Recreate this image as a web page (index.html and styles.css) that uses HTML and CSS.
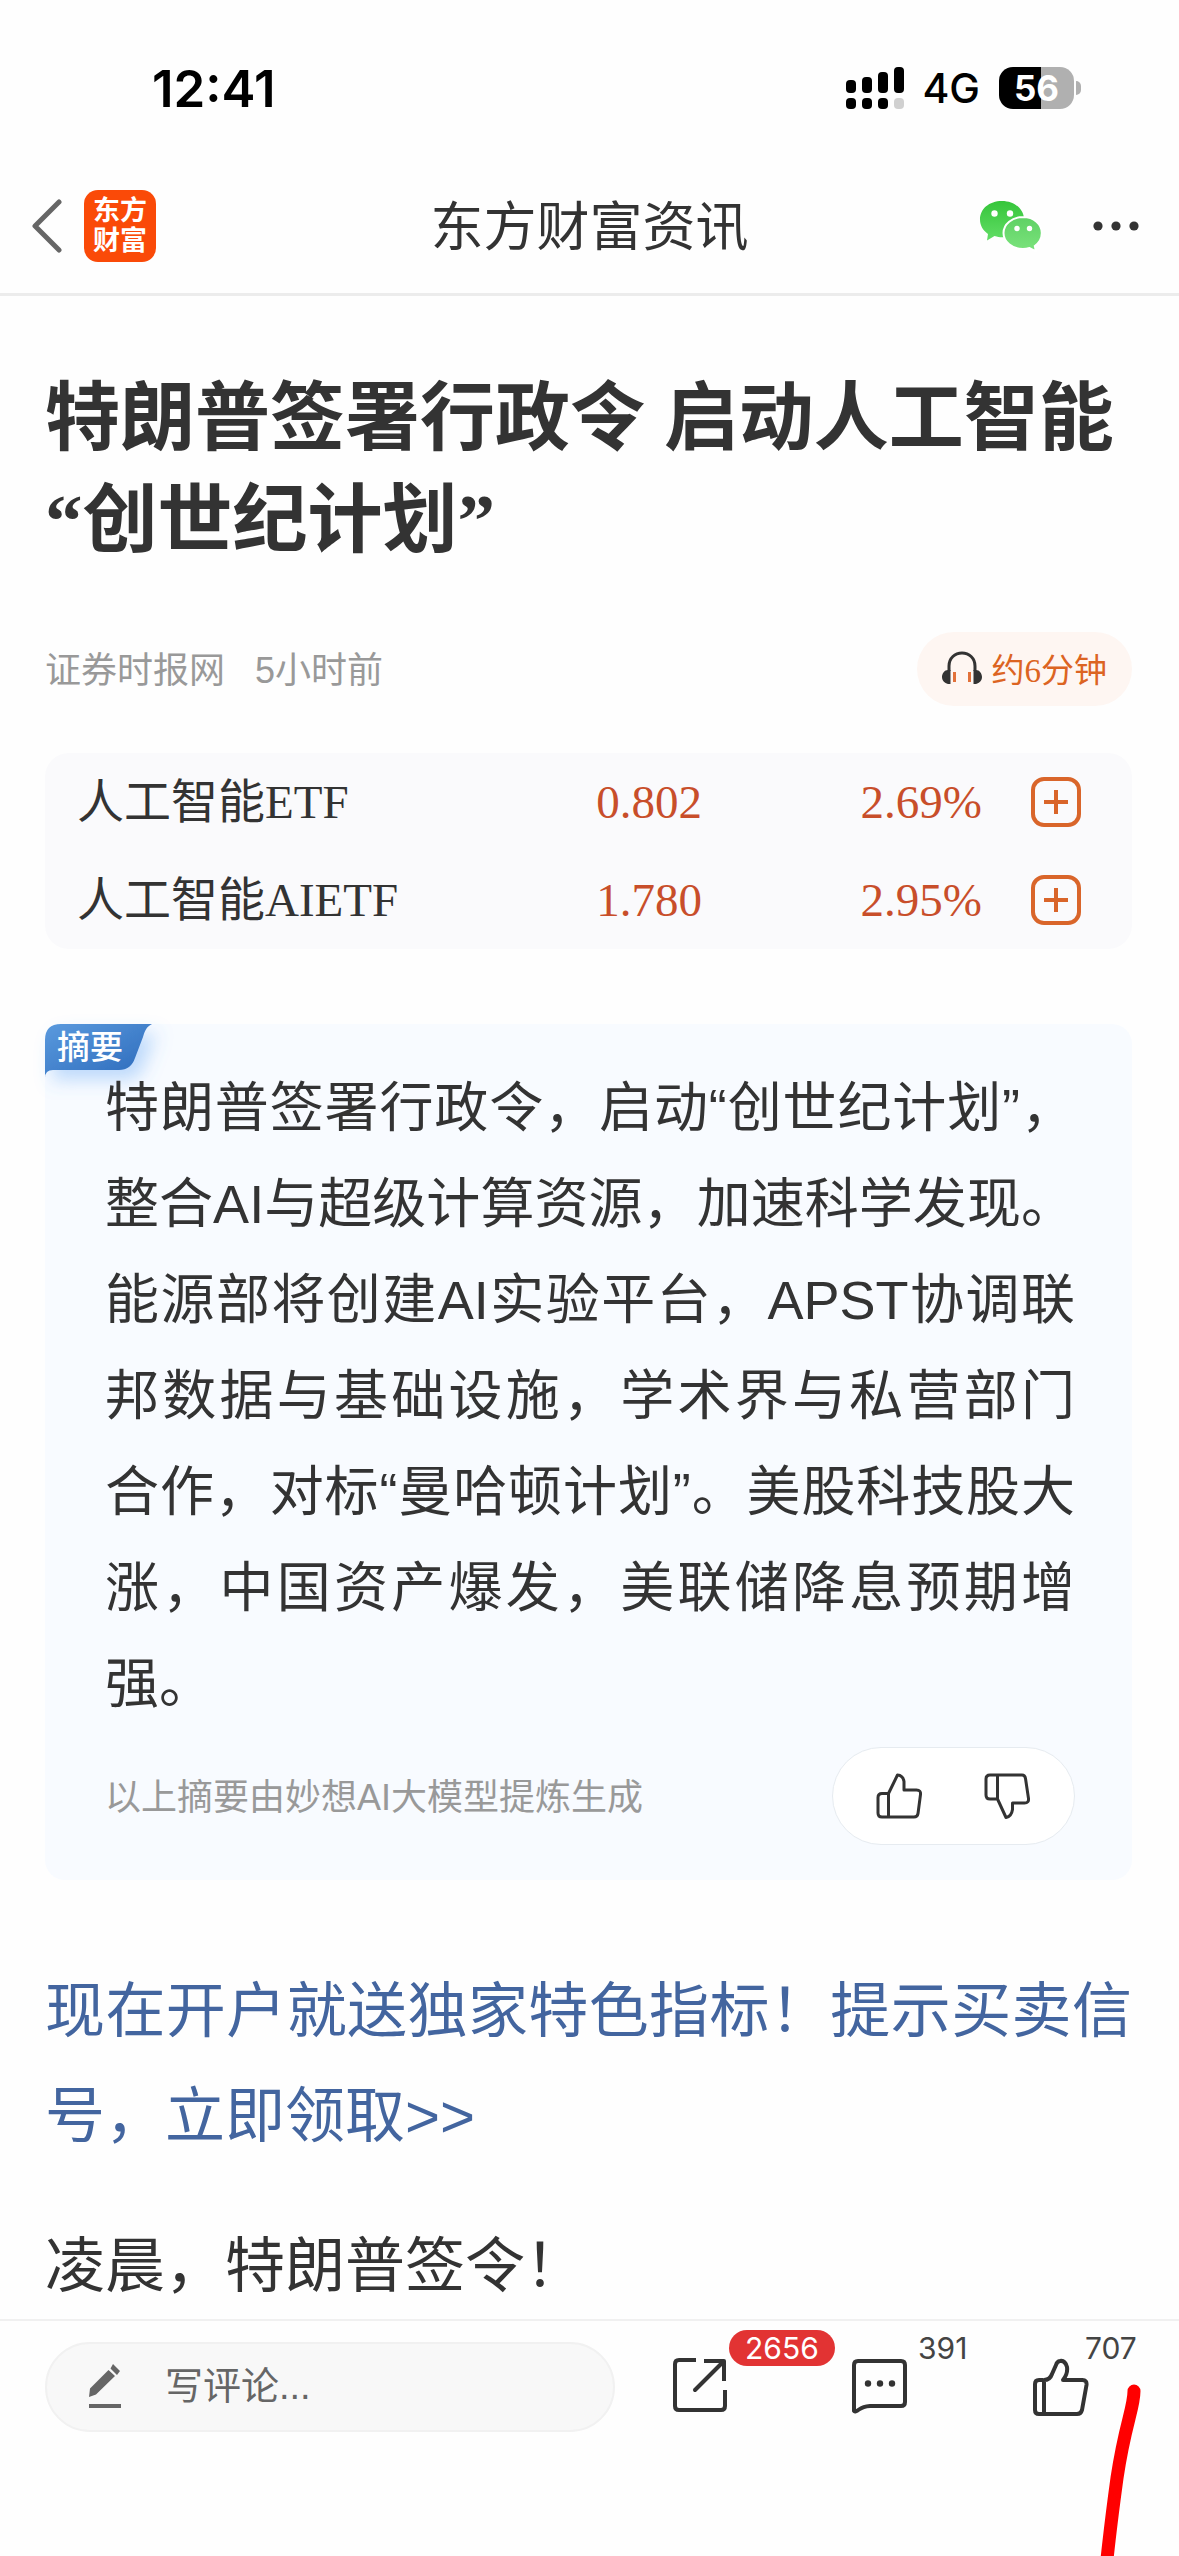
FILE: index.html
```html
<!DOCTYPE html>
<html lang="zh-CN">
<head>
<meta charset="utf-8">
<meta name="viewport" content="width=device-width">
<title>东方财富资讯</title>
<link rel="stylesheet" href="styles.css">
</head>
<body>
<div class="status">
  <span class="clock">12:41</span>
  <div class="status-right">
    <svg width="58" height="42" viewBox="0 0 58 42" aria-hidden="true">
      <rect x="0" y="13" width="10" height="13" rx="4"/>
      <rect x="16" y="10" width="10" height="16" rx="4"/>
      <rect x="32" y="5" width="10" height="21" rx="4"/>
      <rect x="48" y="0" width="10" height="26" rx="4"/>
      <rect x="0" y="31" width="10" height="11" rx="4"/>
      <rect x="16" y="31" width="10" height="11" rx="4"/>
      <rect x="32" y="31" width="10" height="11" rx="4"/>
      <rect x="48" y="31" width="10" height="11" rx="4" fill="#d0d0d0"/>
    </svg>
    <span class="network">4G</span>
    <span class="battery"><span class="battery-level">56</span></span>
  </div>
</div>

<header class="header">
  <button class="icon-button back" aria-label="返回">
    <svg width="30" height="54" viewBox="0 0 30 54" fill="none" stroke="#666" stroke-width="5" stroke-linecap="round" stroke-linejoin="round"><path d="M27 3 3 27l24 24"/></svg>
  </button>
  <a class="logo" href="#"><span>东方</span><span>财富</span></a>
  <span class="header-title">东方财富资讯</span>
  <button class="icon-button wechat" aria-label="微信">
    <svg width="64" height="52" viewBox="0 0 64 52">
      <defs>
        <linearGradient id="g1" x1="0" y1="0" x2="0" y2="1"><stop offset="0" stop-color="#35c53a"/><stop offset="1" stop-color="#62dd66"/></linearGradient>
        <linearGradient id="g2" x1="0" y1="0" x2="0" y2="1"><stop offset="0" stop-color="#5fd165"/><stop offset="1" stop-color="#7be37c"/></linearGradient>
      </defs>
      <path fill="url(#g1)" d="M23 1C10 1 1 9 1 19.500c0 6 3 11 8 14.500l-1 6.500 7.500-4.500c3 1 5 1.200 7.500 1.200 12.500 0 22-8 22-18S35.500 1 23 1Z"/>
      <path fill="url(#g2)" stroke="#fff" stroke-width="2" d="M44 17c-11 0-19.500 7.200-19.500 16S33 49 44 49c2.500 0 4.500-.4 6.500-1l6.500 3.500-1.200-5.500c4.200-3 7-7.500 7-13C62.800 24.200 55 17 44 17Z"/>
      <g fill="#fff"><circle cx="15.500" cy="13.500" r="3.200"/><circle cx="31" cy="13.500" r="3.200"/><circle cx="38" cy="28.500" r="2.700"/><circle cx="50.500" cy="28.500" r="2.700"/></g>
    </svg>
  </button>
  <button class="icon-button more" aria-label="更多">
    <svg width="46" height="10" viewBox="0 0 46 10" fill="#333"><circle cx="5" cy="5" r="4.600"/><circle cx="23" cy="5" r="4.600"/><circle cx="41" cy="5" r="4.600"/></svg>
  </button>
</header>

<main class="article">
  <h1 class="headline">特朗普签署行政令 启动人工智能“创世纪计划”</h1>

  <div class="meta">
    <span class="note">证券时报网</span>
    <time class="note">5小时前</time>
    <button class="listen">
      <svg width="40" height="34" viewBox="0 0 40 34" fill="none">
        <path d="M7 20v-5C7 7 13 2 20 2s13 5 13 13v5" stroke="#333" stroke-width="3"/>
        <path d="M8.500 19v14H6C2.500 32 0 29.500 0 26S2.500 19 6 19ZM31.500 19v14H34c3.500-1 6-3.500 6-7S37.500 19 34 19Z" fill="#333"/>
        <path d="M12.500 21v10M27.500 21v10" stroke="#e2713a" stroke-width="3"/>
      </svg>
      <span>约6分钟</span>
    </button>
  </div>

  <div class="quotes">
    <table>
      <colgroup><col><col class="col-price"><col class="col-change"><col class="col-add"></colgroup>
      <tr>
        <th scope="row">人工智能ETF</th><td>0.802</td><td>2.69%</td>
        <td><button class="icon-button" aria-label="添加人工智能ETF"><svg width="52" height="52" viewBox="0 0 52 52" fill="none" stroke="#d9652a" stroke-width="4"><rect x="3" y="3" width="46" height="46" rx="11"/><path d="M14 26h24M26 14v24"/></svg></button></td>
      </tr>
      <tr>
        <th scope="row">人工智能AIETF</th><td>1.780</td><td>2.95%</td>
        <td><button class="icon-button" aria-label="添加人工智能AIETF"><svg width="52" height="52" viewBox="0 0 52 52" fill="none" stroke="#d9652a" stroke-width="4"><rect x="3" y="3" width="46" height="46" rx="11"/><path d="M14 26h24M26 14v24"/></svg></button></td>
      </tr>
    </table>
  </div>

  <section class="summary">
    <div class="tag">
      <svg class="tag-shape" width="150" height="90" viewBox="0 0 150 90" aria-hidden="true">
        <defs>
          <linearGradient id="g3" x1="0" y1="0" x2="1" y2="1"><stop offset="0" stop-color="#5a9ade"/><stop offset="1" stop-color="#2b69ba"/></linearGradient>
          <filter id="soft" x="-20%" y="-20%" width="160%" height="180%"><feDropShadow dx="8" dy="10" stdDeviation="9" flood-color="#4f9af5" flood-opacity=".35"/></filter>
        </defs>
        <path filter="url(#soft)" fill="url(#g3)" d="M0 16Q0 0 16 0H107C101 3 100 7 98 13L90 34Q86 46 74 46H8Q0 46 0 54Z"/>
      </svg>
      <span class="tag-text">摘要</span>
    </div>
    <p class="summary-text">特朗普签署行政令，启动“创世纪计划”，整合AI与超级计算资源，加速科学发现。能源部将创建AI实验平台，APST协调联邦数据与基础设施，学术界与私营部门合作，对标“曼哈顿计划”。美股科技股大涨，中国资产爆发，美联储降息预期增强。</p>
    <div class="summary-foot">
      <span class="note">以上摘要由妙想AI大模型提炼生成</span>
      <div class="votes">
        <button class="icon-button" aria-label="赞同">
          <svg width="46" height="46" viewBox="0 0 46 46" fill="none" stroke="#333" stroke-width="3" stroke-linejoin="round"><path d="M12.500 20.500H6q-4 0-4 4V40q0 4 4 4h32q3.500 0 4-3.500l2.500-19q.5-4.500-4-4.500H28V8.500Q27 2.500 21.500 2L12.500 20.500V44"/></svg>
        </button>
        <button class="icon-button" aria-label="反对">
          <svg width="46" height="46" viewBox="0 0 46 46" fill="none" stroke="#333" stroke-width="3" stroke-linejoin="round"><path d="M13.500 26H6q-4 0-4-4V6q0-4 4-4h32q3 0 3.500 3.500l3 20q.5 4.500-4 4.500H28.500v6.500Q27.500 43.500 22 44.500L13.500 26V2"/></svg>
        </button>
      </div>
    </div>
  </section>

  <p class="body-text"><a href="#">现在开户就送独家特色指标！提示买卖信号，立即领取&gt;&gt;</a></p>
  <p class="body-text">凌晨，特朗普签令！</p>
</main>

<footer class="toolbar">
  <label class="comment">
    <svg width="34" height="46" viewBox="0 0 34 46" fill="#666" aria-hidden="true"><path d="M19.500 7 26 13 7 31.500 0 34l1-8.500ZM24 1l7 7-3 4-6.500-6.500ZM0 41h32v4H0Z"/></svg>
    <input type="text" placeholder="写评论..." aria-label="写评论">
  </label>
  <button class="action">
    <svg width="54" height="54" viewBox="0 0 54 54" fill="none" stroke="#333" stroke-width="4" stroke-linejoin="round"><path d="M23 2H6Q2 2 2 6v42q0 4 4 4h42q4 0 4-4V32M31 3h20v20"/><path d="M50 4 22 32" stroke-linecap="round"/></svg>
    <span class="count badge">2656</span>
  </button>
  <button class="action">
    <svg width="56" height="56" viewBox="0 0 56 56" fill="none" stroke="#333" stroke-width="4" stroke-linejoin="round"><path d="M2 53V7q0-4 4-4h43q4 0 4 4v37q0 4-4 4H18Q11 48.500 7 51.500T2 53Z"/><g fill="#333" stroke="none"><circle cx="16" cy="25.500" r="3.200"/><circle cx="28" cy="25.500" r="3.200"/><circle cx="40" cy="25.500" r="3.200"/></g></svg>
    <span class="count">391</span>
  </button>
  <button class="action">
    <svg width="56" height="58" viewBox="0 0 56 58" fill="none" stroke="#333" stroke-width="4" stroke-linejoin="round"><path d="M10 22H6q-4 0-4 4v26q0 4 4 4h38q4 0 5-4l4.500-25q.5-5-4-5H30q5-6 4-13Q32 2 27 3q-3 .5-4 4l-4 9q-2 6-8 6v34"/></svg>
    <span class="count likes">707</span>
  </button>
  <svg class="stroke" width="46" height="172" viewBox="0 0 46 172" fill="none" stroke="#f00" stroke-width="13" stroke-linecap="round" aria-hidden="true"><path d="M39 7C39 24 30 40 22 94Q15 145 11 185"/></svg>
</footer>
</body>
</html>
```

FILE: styles.css
```css
* { box-sizing: border-box; }

body {
  margin: 0;
  min-height: 100vh;
  display: flex;
  flex-direction: column;
  background: #fefefe;
  color: #333;
  font-family: "Liberation Sans", "Noto Sans CJK SC", sans-serif;
  text-spacing-trim: space-all;
}

h1, p { margin: 0; }
a { color: #43659f; text-decoration: none; }
svg { display: block; flex: none; }

button {
  border: 0;
  padding: 0;
  background: none;
  color: inherit;
  font: inherit;
}

.icon-button { display: block; }

/* Status bar */
.status {
  display: flex;
  align-items: center;
  justify-content: space-between;
  height: 158px;
  padding: 18px 98px 0 152px;
  color: #000;
  font-family: Inter, sans-serif;
}
.clock { font-size: 51px; font-weight: 600; }
.status-right { display: flex; align-items: center; }
.network { margin: 0 19px 0 18px; font-size: 41px; font-weight: 500; line-height: 48px; }
.battery {
  position: relative;
  width: 75px;
  height: 42px;
  margin-right: 7px;
}
.battery::after {
  content: "";
  position: absolute;
  left: 77px;
  top: 14px;
  width: 5px;
  height: 14px;
  border-radius: 0 5px 5px 0;
  background: #b0b0b0;
}
.battery-level {
  display: block;
  border-radius: 14px;
  background: linear-gradient(90deg, #000 56%, #b0b0b0 56%);
  color: #fff;
  font-size: 35px;
  font-weight: 700;
  line-height: 42px;
  text-align: center;
}

/* Navigation header */
.header {
  position: relative;
  display: flex;
  align-items: center;
  height: 138px;
  padding: 0 40px 0 32px;
  border-bottom: 3px solid #ececec;
}
.logo {
  display: flex;
  flex-direction: column;
  align-items: center;
  justify-content: center;
  width: 72px;
  height: 72px;
  margin-left: 22px;
  border-radius: 14px;
  background: #fa4a08;
  color: #fff;
  font-size: 27px;
  font-weight: 700;
  line-height: 30px;
}
.header-title {
  position: absolute;
  left: 0;
  right: 0;
  padding-top: 4px;
  text-align: center;
  font-size: 53px;
  line-height: 72px;
  pointer-events: none;
}
.wechat { margin-left: auto; }
.more { margin-left: 50px; }

/* Article */
.article { flex: 1; padding: 72px 47px 0 45px; }
.headline {
  font-family: "Liberation Serif", "Noto Sans CJK SC", serif;
  font-size: 75px;
  line-height: 102px;
}
.meta {
  display: flex;
  align-items: center;
  gap: 30px;
  margin-top: 60px;
  color: #999;
}
.note {
  padding-bottom: 4px;
  color: #999;
  font-size: 36px;
}
.listen {
  display: flex;
  align-items: center;
  gap: 10px;
  height: 74px;
  margin-left: auto;
  padding: 0 25px 2px;
  border-radius: 37px;
  background: #fef6f2;
  color: #dc6422;
  font-family: "Liberation Serif", "Noto Sans CJK SC", serif;
  font-size: 33px;
}

/* Related funds */
.quotes {
  margin-top: 47px;
  padding: 0 50px 0 32px;
  border-radius: 24px;
  background: #fafafc;
}
.quotes table {
  width: 100%;
  table-layout: fixed;
  border-collapse: collapse;
  font-family: "Liberation Serif", "Noto Sans CJK SC", serif;
  font-size: 47px;
  line-height: 60px;
}
.quotes tr { height: 98px; }
.quotes th { padding: 0; font-weight: 400; text-align: left; white-space: nowrap; }
.quotes td { padding: 0; color: #c84e2a; text-align: right; }
.quotes .icon-button { margin-left: auto; }
.col-price { width: 200px; }
.col-change { width: 280px; }
.col-add { width: 100px; }

/* AI summary */
.summary {
  position: relative;
  margin-top: 75px;
  padding: 36px 57px 35px 60px;
  border-radius: 20px;
  background: #f8fbff;
}
.tag { position: absolute; left: 0; top: 0; }
.tag-shape { overflow: visible; }
.tag-text {
  position: absolute;
  left: 12px;
  top: 0;
  color: #fff;
  font-size: 33px;
  font-weight: 500;
  line-height: 48px;
  white-space: nowrap;
}
.summary-text {
  position: relative;
  font-size: 54px;
  line-height: 96px;
  text-align: justify;
}
.summary-foot {
  display: flex;
  align-items: center;
  justify-content: space-between;
  margin-top: 15px;
}
.votes {
  display: flex;
  align-items: center;
  gap: 62px;
  height: 98px;
  padding: 0 44px 0 43px;
  border: 1px solid #e6ebf0;
  border-radius: 49px;
  background: #fff;
}

.body-text {
  margin-top: 45px;
  font-size: 60px;
  line-height: 105px;
  text-align: justify;
}
.summary + .body-text { margin-top: 79px; }

/* Bottom toolbar */
.toolbar {
  position: sticky;
  bottom: 0;
  display: flex;
  align-items: flex-start;
  height: 237px;
  padding: 21px 90px 0 45px;
  border-top: 2px solid #f0f0f0;
  background: #fefefe;
}
.comment {
  flex: 1;
  min-width: 0;
  display: flex;
  align-items: center;
  gap: 42px;
  height: 90px;
  margin-right: 58px;
  padding: 0 42px 2px;
  border: 2px solid #f1f1f1;
  border-radius: 45px;
  background: #f8f8f8;
}
.comment input {
  flex: 1;
  min-width: 0;
  padding: 0;
  border: 0;
  outline: 0;
  background: none;
  font: inherit;
  font-size: 38px;
}
.comment input::placeholder { color: #666; opacity: 1; }
.action { position: relative; margin-top: 16px; }
.action + .action { margin-left: 125px; }
.count {
  position: absolute;
  left: 56px;
  top: -28px;
  padding: 0 10px;
  color: #444;
  font-family: Inter, sans-serif;
  font-size: 30px;
  line-height: 36px;
}
.badge {
  padding: 0 16px;
  border-radius: 18px;
  background: #e23333;
  color: #fff;
}
.likes { left: 42px; }
.stroke { position: absolute; right: 38px; bottom: 0; }
```
